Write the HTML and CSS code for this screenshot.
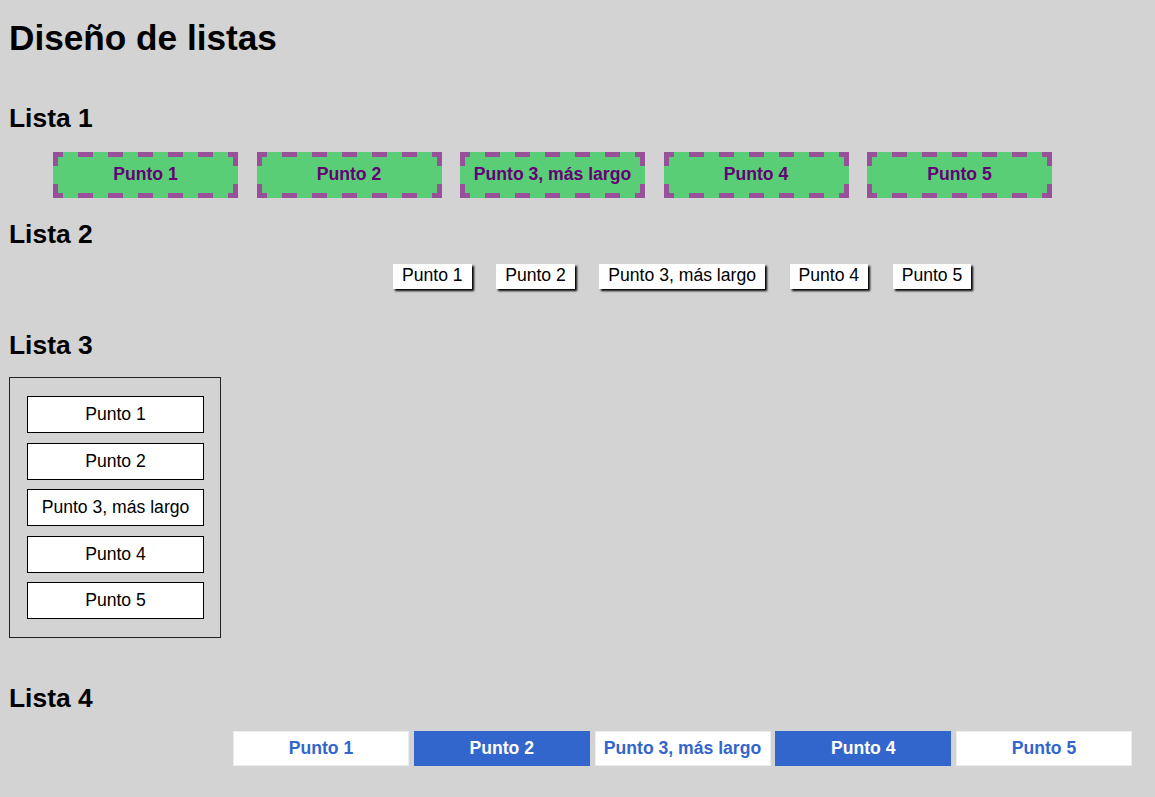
FILE: index.html
```html
<!DOCTYPE html>
<html lang="es">
<head>
<meta charset="utf-8">
<title>Diseño de listas</title>
<link rel="stylesheet" href="styles.css">
</head>
<body>
<h1 class="title">Diseño de listas</h1>

<h2 class="heading h-l1">Lista 1</h2>
<ul class="list list1">
  <li class="item1">Punto 1</li>
  <li class="item1">Punto 2</li>
  <li class="item1">Punto 3, más largo</li>
  <li class="item1">Punto 4</li>
  <li class="item1">Punto 5</li>
</ul>

<h2 class="heading h-l2">Lista 2</h2>
<ul class="list list2">
  <li class="item2">Punto 1</li>
  <li class="item2">Punto 2</li>
  <li class="item2">Punto 3, más largo</li>
  <li class="item2">Punto 4</li>
  <li class="item2">Punto 5</li>
</ul>

<h2 class="heading h-l3">Lista 3</h2>
<ul class="list list3">
  <li class="item3">Punto 1</li>
  <li class="item3">Punto 2</li>
  <li class="item3">Punto 3, más largo</li>
  <li class="item3">Punto 4</li>
  <li class="item3">Punto 5</li>
</ul>

<h2 class="heading h-l4">Lista 4</h2>
<ul class="list list4">
  <li class="item4">Punto 1</li>
  <li class="item4 item4-alt">Punto 2</li>
  <li class="item4">Punto 3, más largo</li>
  <li class="item4 item4-alt">Punto 4</li>
  <li class="item4">Punto 5</li>
</ul>
</body>
</html>
```

FILE: styles.css
```css
html {
  background: #d3d3d3;
}

body {
  margin: 0;
  padding: 0 9px;
  background: #d3d3d3;
  color: #000;
  font-family: "Liberation Sans", Arial, Helvetica, sans-serif;
  font-size: 17.6px;
}

.title {
  margin: 18px 0 0;
  font-size: 35.2px;
  line-height: 40px;
  font-weight: bold;
}

.heading {
  margin: 0;
  font-size: 26.4px;
  line-height: 30px;
  font-weight: bold;
}

.h-l1 { margin-top: 45px; }
.h-l2 { margin-top: 21px; }
.h-l3 { margin-top: 41px; }
.h-l4 { margin-top: 45px; }

.list {
  list-style: none;
  margin: 0;
  padding: 0;
}

/* Lista 1 — long dashed purple border drawn with gradients */
.list1 {
  display: flex;
  gap: 18.5px;
  margin-top: 19px;
  padding-left: 44px;
}

.item1 {
  --dash: #99509a;
  box-sizing: border-box;
  width: 185px;
  height: 46px;
  background-color: #59ce76;
  background-image:
    linear-gradient(to right, var(--dash) 0 15px, transparent 15px 30px),
    linear-gradient(to right, var(--dash) 0 15px, transparent 15px 30px),
    linear-gradient(to bottom, var(--dash) 0 14px, transparent 14px 32px, var(--dash) 32px),
    linear-gradient(to bottom, var(--dash) 0 14px, transparent 14px 32px, var(--dash) 32px);
  background-size: 30px 5px, 30px 5px, 5px 100%, 5px 100%;
  background-position: -5px 0, -5px 100%, 0 0, 100% 0;
  background-repeat: repeat-x, repeat-x, no-repeat, no-repeat;
  color: #660077;
  font-weight: bold;
  text-align: center;
  line-height: 44px;
}

/* Lista 2 */
.list2 {
  display: flex;
  gap: 24.5px;
  margin-top: 15px;
  padding-left: 384px;
}

.item2 {
  background: #fff;
  padding: 1px 9px 3px;
  line-height: 21px;
  box-shadow: 2px 2px 2px #000;
}

/* Lista 3 */
.list3 {
  display: flex;
  flex-direction: column;
  gap: 9.5px;
  width: 177px;
  margin-top: 17px;
  padding: 18px 16px 18px 17px;
  border: 1px solid #222;
}

.item3 {
  box-sizing: border-box;
  height: 37px;
  border: 1px solid #000;
  background: #fff;
  text-align: center;
  line-height: 35px;
}

/* Lista 4 */
.list4 {
  display: flex;
  gap: 4.75px;
  margin-top: 18px;
  padding-left: 224px;
}

.item4 {
  box-sizing: border-box;
  width: 176px;
  height: 35px;
  border: 1px solid #ececec;
  background: #fff;
  color: #3366cc;
  font-weight: bold;
  text-align: center;
  line-height: 33px;
}

.item4-alt {
  background: #3366cc;
  border-color: #3366cc;
  color: #fff;
}
```
